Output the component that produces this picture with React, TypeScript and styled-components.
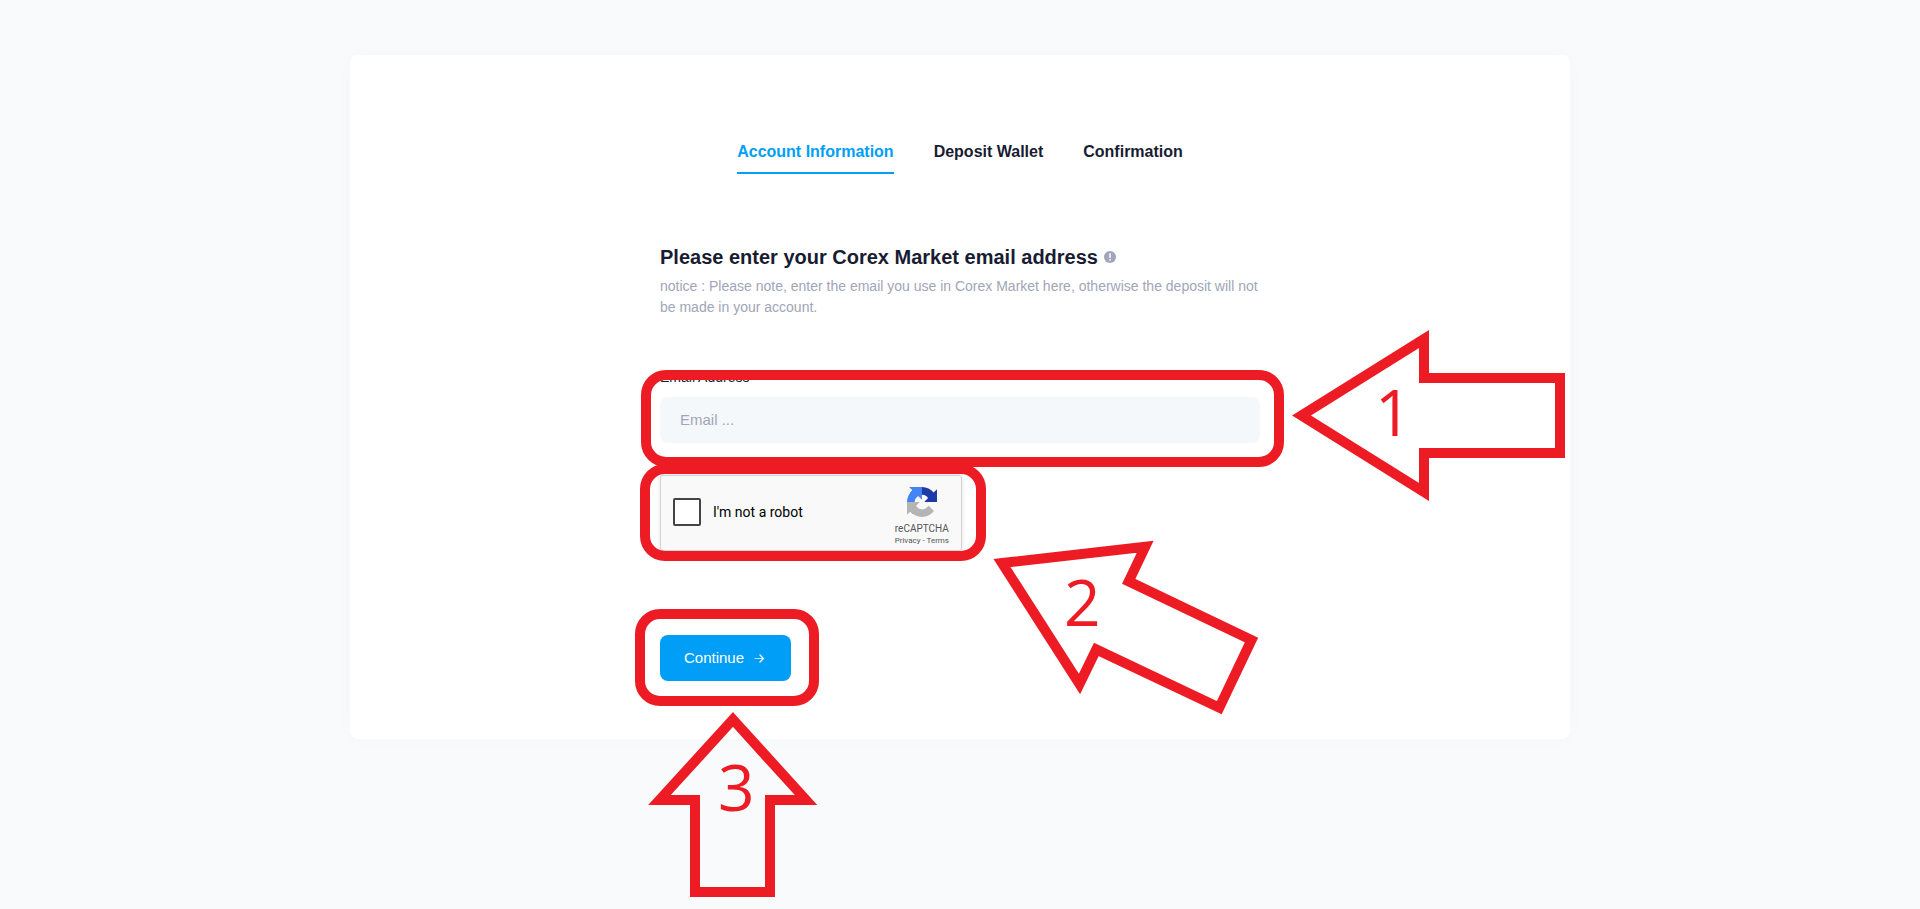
import React from "react";
import styled, { createGlobalStyle } from "styled-components";

const RED = "#ed1c24";
const SANS = '"Liberation Sans", Arial, Helvetica, sans-serif';

const GlobalStyle = createGlobalStyle`
  *, *::before, *::after { box-sizing: border-box; }
  body {
    margin: 0;
    background: #f9fafc;
    color: #181c32;
    font-family: ${SANS};
    font-size: 14px;
  }
`;

const Page = styled.div`
  display: flex;
  justify-content: center;
  min-height: 100vh;
  padding: 55px 20px 160px;
  overflow-x: hidden;
`;

const Card = styled.main`
  display: flex;
  flex-direction: column;
  align-items: center;
  align-self: flex-start;
  width: 100%;
  max-width: 1220px;
  padding: 85px 20px 58px;
  border-radius: 8px;
  background: #fff;
  box-shadow: 0 0 20px rgba(76, 87, 125, 0.02);
`;

const Steps = styled.nav`
  display: flex;
  flex-wrap: wrap;
  gap: 40px;
`;

const Step = styled.a<{ $active?: boolean }>`
  padding-bottom: 8px;
  border-bottom: 2px solid ${(p) => (p.$active ? "#009ef7" : "transparent")};
  color: ${(p) => (p.$active ? "#009ef7" : "#181c32")};
  font-size: 16px;
  font-weight: 700;
  line-height: 24px;
  text-decoration: none;
`;

const Form = styled.form`
  display: flex;
  flex-direction: column;
  align-items: flex-start;
  width: 100%;
  max-width: 600px;
  margin-top: 71px;
`;

const Title = styled.h1`
  display: flex;
  align-items: center;
  gap: 6px;
  margin: 0;
  font-size: 20px;
  font-weight: 700;
  line-height: 24px;
`;

const Notice = styled.p`
  margin: 7px 0 0;
  color: #a1a5b7;
  font-size: 14px;
  line-height: 21px;
`;

const Marked = styled.div<{ $top: number }>`
  position: relative;
  margin-top: ${(p) => p.$top}px;
`;

const EmailField = styled(Marked)`
  display: flex;
  flex-direction: column;
  gap: 10px;
  width: 100%;
`;

const Label = styled.label`
  font-size: 14px;
  line-height: 20px;
`;

const EmailInput = styled.input`
  width: 100%;
  height: 46px;
  padding: 0 20px 2px;
  border: 0;
  border-radius: 8px;
  background: #f4f8fb;
  color: #181c32;
  font: 15px ${SANS};
  &::placeholder {
    color: #a1a5b7;
    opacity: 1;
  }
`;

const Captcha = styled.div`
  display: flex;
  align-items: center;
  width: 302px;
  height: 76px;
  padding: 0 12px 2px;
  border: 1px solid #d3d3d3;
  border-radius: 3px;
  background: #f9f9f9;
  box-shadow: 0 0 4px 1px rgba(0, 0, 0, 0.08);
  color: #000;
  font-family: Roboto, ${SANS};
`;

const CaptchaLabel = styled.label`
  display: flex;
  flex: 1;
  align-items: center;
  gap: 12px;
  font-size: 14px;
  line-height: 18px;
`;

const Tick = styled.input`
  appearance: none;
  width: 28px;
  height: 28px;
  margin: 0;
  border: 2px solid #444;
  border-radius: 2px;
  background: #fff;
`;

const CaptchaBrand = styled.div`
  display: flex;
  flex-direction: column;
  align-items: center;
  align-self: flex-start;
  padding-top: 11px;
  color: #555;
  font-size: 10px;
  line-height: 12px;
`;

const CaptchaName = styled.span`
  margin-top: 6px;
`;

const CaptchaLinks = styled.span`
  font-size: 8px;
  a {
    color: inherit;
    text-decoration: none;
  }
`;

const ContinueButton = styled.button`
  display: flex;
  align-items: center;
  gap: 8px;
  height: 46px;
  padding: 0 25px 2px 24px;
  border: 0;
  border-radius: 8px;
  background: #009ef7;
  color: #fff;
  font: 15px ${SANS};
  cursor: pointer;
`;

/* Tutorial annotations that lie over the form */
const Frame = styled.span<{ $inset: string }>`
  position: absolute;
  inset: ${(p) => p.$inset};
  border: 10px solid ${RED};
  border-radius: 25px;
  pointer-events: none;
`;

const Callout = styled.div<{ $left: string; $top: number; $w: number; $h: number }>`
  position: absolute;
  left: ${(p) => p.$left};
  top: ${(p) => p.$top}px;
  width: ${(p) => p.$w}px;
  height: ${(p) => p.$h}px;
  pointer-events: none;
  svg {
    display: block;
    fill: none;
    stroke: ${RED};
    stroke-width: 10;
    stroke-miterlimit: 10;
  }
`;

const Digit = styled.span<{ $x: number; $y: number }>`
  position: absolute;
  left: ${(p) => p.$x}px;
  top: ${(p) => p.$y}px;
  color: ${RED};
  font-family: "Open Sans", "Noto Sans", sans-serif;
  font-size: 64px;
  line-height: 64px;
`;

const InfoIcon = () => (
  <svg width="12" height="12" viewBox="0 0 12 12" aria-hidden="true">
    <circle cx="6" cy="6" r="6" fill="#a1a5b7" />
    <path d="M6 2.8v3.6" stroke="#fff" strokeWidth="1.5" strokeLinecap="round" />
    <circle cx="6" cy="8.8" r="0.85" fill="#fff" />
  </svg>
);

const ArrowIcon = () => (
  <svg width="14" height="14" viewBox="0 0 14 14" fill="none" stroke="#fff" aria-hidden="true">
    <path d="M3 8.5H11" strokeWidth="1.2" opacity="0.7" strokeLinecap="round" />
    <path d="M8 5 11.4 8.5 8 12" strokeWidth="1.3" strokeLinecap="round" strokeLinejoin="round" />
  </svg>
);

const RecaptchaLogo = () => (
  <svg width="30" height="30" viewBox="0 0 64 64" aria-hidden="true">
    <path fill="#1c3aa9" d="M64 31.955l-.033-1.37V4.687l-7.16 7.16C50.948 4.674 42.033.093 32.05.093c-10.4 0-19.622 4.96-25.458 12.64l11.736 11.86a15.55 15.55 0 0 1 4.754-5.334c2.05-1.6 4.952-2.906 8.968-2.906.485 0 .86.057 1.135.163 4.976.393 9.288 3.14 11.828 7.124l-8.307 8.307L64 31.953" />
    <path fill="#4285f4" d="M31.862.094l-1.37.033H4.594l7.16 7.16C4.58 13.147 0 22.06 0 32.046c0 10.4 4.96 19.622 12.64 25.458L24.5 45.768a15.55 15.55 0 0 1-5.334-4.754c-1.6-2.05-2.906-4.952-2.906-8.968 0-.485.057-.86.163-1.135.393-4.976 3.14-9.288 7.124-11.828l8.307 8.307L31.86.095" />
    <path fill="#b5b5b5" d="M.001 32.045l.033 1.37v25.898l7.16-7.16c5.86 7.173 14.774 11.754 24.76 11.754 10.4 0 19.622-4.96 25.458-12.64l-11.736-11.86a15.55 15.55 0 0 1-4.754 5.334c-2.05 1.6-4.952 2.906-8.968 2.906-.485 0-.86-.057-1.135-.163-4.976-.393-9.288-3.14-11.828-7.124l8.307-8.307c-10.522.04-22.4.066-27.295-.005" />
  </svg>
);

export default function App() {
  return (
    <>
      <GlobalStyle />
      <Page>
        <Card>
          <Steps aria-label="Deposit steps">
            <Step href="#account" $active aria-current="step">Account Information</Step>
            <Step href="#wallet">Deposit Wallet</Step>
            <Step href="#confirmation">Confirmation</Step>
          </Steps>

          <Form onSubmit={(e) => e.preventDefault()}>
            <Title>
              Please enter your Corex Market email address
              <InfoIcon />
            </Title>
            <Notice>
              notice : Please note, enter the email you use in Corex Market here, otherwise the deposit will not be made in your account.
            </Notice>

            <EmailField $top={49}>
              <Label htmlFor="email">Email Address</Label>
              <EmailInput id="email" type="email" placeholder="Email ..." />
              <Frame $inset="3px -24px -24px -19px" />
              <Callout $left="calc(100% + 30px)" $top={-38} $w={276} $h={174}>
                <svg width="276" height="174" viewBox="1290 329 276 174" aria-hidden="true">
                  <path d="M1301.5 415.5 1424 339V378H1560V453H1424V492Z" />
                </svg>
                <Digit $x={85} $y={51}>1</Digit>
              </Callout>
            </EmailField>

            <Marked $top={32}>
              <Captcha>
                <CaptchaLabel>
                  <Tick type="checkbox" />
                  I'm not a robot
                </CaptchaLabel>
                <CaptchaBrand>
                  <RecaptchaLogo />
                  <CaptchaName>reCAPTCHA</CaptchaName>
                  <CaptchaLinks>
                    <a href="#privacy">Privacy</a> - <a href="#terms">Terms</a>
                  </CaptchaLinks>
                </CaptchaBrand>
              </Captcha>
              <Frame $inset="-11px -24px -10px -20px" />
              <Callout $left="calc(100% + 28px)" $top={65} $w={270} $h={176}>
                <svg width="270" height="176" viewBox="990 540 270 176" aria-hidden="true">
                  <path d="M1002 563 1145.2 546.8 1128.7 581.3 1251.5 640 1219.3 707.7 1096.3 649.5 1079.5 684Z" />
                </svg>
                <Digit $x={74} $y={30}>2</Digit>
              </Callout>
            </Marked>

            <Marked $top={84}>
              <ContinueButton type="submit">
                Continue
                <ArrowIcon />
              </ContinueButton>
              <Frame $inset="-26px -28px -25px -25px" />
              <Callout $left="-15px" $top={75} $w={176} $h={188}>
                <svg width="176" height="188" viewBox="645 710 176 188" aria-hidden="true">
                  <path d="M733 719.5 806 800H770V892H695V800H659.5Z" />
                </svg>
                <Digit $x={73} $y={45}>3</Digit>
              </Callout>
            </Marked>
          </Form>
        </Card>
      </Page>
    </>
  );
}
